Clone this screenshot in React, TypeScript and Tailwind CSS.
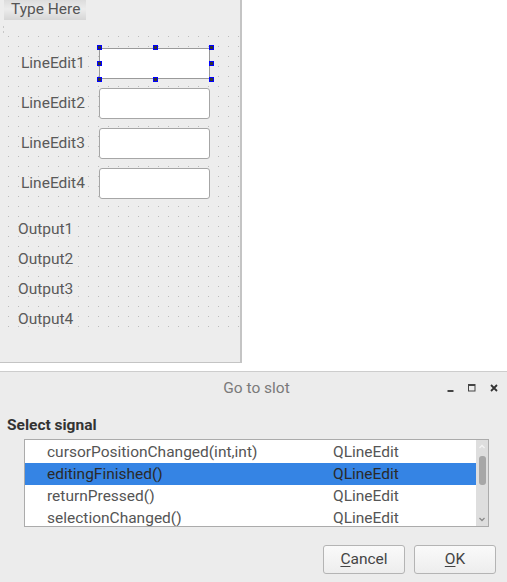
const signals = [
  ["cursorPositionChanged(int,int)", "QLineEdit"],
  ["editingFinished()", "QLineEdit"],
  ["returnPressed()", "QLineEdit"],
  ["selectionChanged()", "QLineEdit"],
];

function Handle() {
  return <span className="block h-[5px] w-[5px] border border-[#0000ff] bg-[#333]" />;
}

function SelectedEdit() {
  return (
    <div className="relative h-[31px] w-[111px] border border-[#9a9a9a] bg-white">
      {/* selection handles */}
      <div className="absolute -left-[3px] -top-[4px] flex w-[117px] justify-between">
        <Handle />
        <Handle />
        <Handle />
      </div>
      <div className="absolute -left-[3px] top-[12px] flex w-[117px] justify-between">
        <Handle />
        <Handle />
      </div>
      <div className="absolute -left-[3px] -bottom-[4px] flex w-[117px] justify-between">
        <Handle />
        <Handle />
        <Handle />
      </div>
    </div>
  );
}

function FormPanel() {
  return (
    <div className="h-[363px] w-[242px] border-r-2 border-b border-[#c4c4c4] bg-[#ededed]">
      {/* menu bar */}
      <div className="flex h-[20px] pl-[4px]">
        <div className="flex w-[82px] items-center bg-[linear-gradient(#dcdcdc,#ececec_45%,#d6d6d6)] pl-[7px] text-[15.5px] text-[#555]">
          Type Here
        </div>
      </div>
      <div className="ml-[3px] mt-[6px] flex flex-col gap-[3px]">
        <span className="block h-[2px] w-[1px] bg-[#c8c8c8]" />
        <span className="block h-[2px] w-[1px] bg-[#c8c8c8]" />
      </div>

      {/* designer canvas with dot grid */}
      <div className="ml-[5px] mt-[1px] h-[296px] w-[235px] bg-[radial-gradient(circle_at_0.5px_0.5px,#bcbcbc_0.6px,transparent_0.9px)] [background-size:10px_10px] [background-position:3px_2px]">
        <div className="flex flex-col gap-[9px] pt-[14px]">
          {["LineEdit1", "LineEdit2", "LineEdit3", "LineEdit4"].map((label, i) => (
            <div key={label} className="flex items-center">
              <span className="w-[94px] shrink-0 pl-[16px] text-[15.5px] text-[#5a5a5a]">{label}</span>
              {i === 0 ? (
                <SelectedEdit />
              ) : (
                <div className="h-[31px] w-[111px] rounded-[3px] border border-[#a6a6a6] bg-white" />
              )}
            </div>
          ))}
        </div>
        <div className="mt-[16px] flex flex-col pl-[13px]">
          {["Output1", "Output2", "Output3", "Output4"].map((o) => (
            <span key={o} className="flex h-[30px] items-center text-[15.5px] text-[#5a5a5a]">
              {o}
            </span>
          ))}
        </div>
      </div>
    </div>
  );
}

function Dialog() {
  return (
    <div className="flex flex-1 flex-col border-t border-[#cdcdcd] bg-[#ececec]">
      {/* title bar */}
      <div className="relative flex h-[30px] items-center justify-center pl-[6px] pt-[3px] text-[15.5px] text-[#7a7a7a]">
        Go to slot
        <div className="absolute right-[9px] top-[12px] flex items-end gap-[14px]">
          <svg width="7" height="8" viewBox="0 0 7 8">
            <rect x="0.5" y="6" width="6" height="2" fill="#444" />
          </svg>
          <svg width="8" height="8" viewBox="0 0 8 8">
            <rect x="0.5" y="0.5" width="6.5" height="6.5" fill="none" stroke="#444" strokeWidth="1" />
            <rect x="0.5" y="0.5" width="6.5" height="1.5" fill="#444" />
          </svg>
          <svg width="8" height="8" viewBox="0 0 8 8">
            <path d="M1 1 L7 7 M7 1 L1 7" stroke="#333" strokeWidth="1.8" />
          </svg>
        </div>
      </div>

      <div className="pl-[7px] pt-[12px] text-[15.5px] font-bold text-[#333]">Select signal</div>

      {/* signal list */}
      <div className="ml-[24px] mt-[2px] flex h-[88px] w-[465px] overflow-hidden border border-[#ababab] bg-white">
        <div className="flex-1 pt-[1px]">
          {signals.map(([name, cls], i) => (
            <div
              key={name}
              className={`flex h-[22px] items-center text-[15.5px] ${
                i === 1 ? "bg-[#3584e4] text-[#2a2a2a]" : "text-[#555]"
              }`}
            >
              <span className="w-[308px] shrink-0 pl-[22px]">{name}</span>
              <span>{cls}</span>
            </div>
          ))}
        </div>
        <div className="flex w-[12px] flex-col items-center bg-[#dedede] py-[4px]">
          <svg width="6" height="5" viewBox="0 0 6 5">
            <path d="M0.5 4 L3 1.5 L5.5 4" fill="none" stroke="#f4f4f4" strokeWidth="1.3" />
          </svg>
          <div className="mt-[7px] h-[29px] w-[7px] rounded-[3px] bg-[#a7a7a7]" />
          <div className="flex-1" />
          <svg width="6" height="5" viewBox="0 0 6 5">
            <path d="M0.5 1 L3 3.5 L5.5 1" fill="none" stroke="#8a8a8a" strokeWidth="1.3" />
          </svg>
        </div>
      </div>

      {/* buttons */}
      <div className="mt-[18px] flex justify-end gap-[9px] pr-[11px]">
        <button className="h-[29px] w-[82px] rounded-[3px] border border-[#b4b4b4] bg-[linear-gradient(#fafafa,#ededed)] text-[15.5px] text-[#444]">
          <span className="underline decoration-1 underline-offset-2">C</span>ancel
        </button>
        <button className="h-[29px] w-[82px] rounded-[3px] border border-[#b4b4b4] bg-[linear-gradient(#fafafa,#ededed)] text-[15.5px] text-[#444]">
          <span className="underline decoration-1 underline-offset-2">O</span>K
        </button>
      </div>
    </div>
  );
}

export default function App() {
  return (
    <div className="flex h-[582px] w-[507px] flex-col overflow-hidden bg-white font-['Roboto',sans-serif]">
      <div className="flex h-[371px] shrink-0">
        <FormPanel />
      </div>
      <Dialog />
    </div>
  );
}
